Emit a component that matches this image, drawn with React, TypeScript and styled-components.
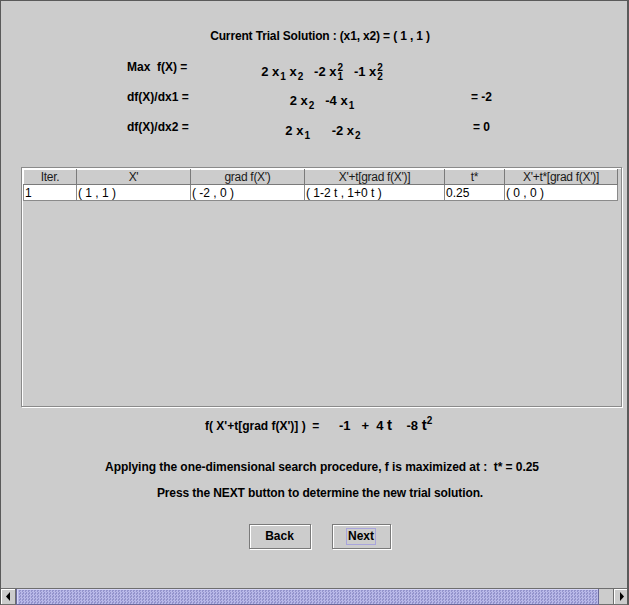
import React from 'react';
import styled, { createGlobalStyle } from 'styled-components';

const GlobalStyle = createGlobalStyle`
    html, body {
        margin: 0;
        padding: 0;
        background: #cccccc;
    }
    * {
        box-sizing: border-box;
    }
`;

const Frame = styled.div`
    width: 629px;
    height: 605px;
    background: #cccccc;
    border-top: 1px solid #5a5a5a;
    border-left: 1px solid #5a5a5a;
    border-right: 2px solid #5a5a5a;
    display: flex;
    flex-direction: column;
    font-family: "Liberation Sans", Arial, sans-serif;
    font-size: 12px;
    color: #000;
    overflow: hidden;
`;

const Title = styled.div`
    margin-top: 27px;
    text-align: center;
    font-weight: bold;
    letter-spacing: -0.15px;
    height: 16px;
    line-height: 16px;
    padding-left: 12px;
`;

const Equations = styled.div`
    margin-top: 15px;
    padding-left: 126px;
    display: grid;
    grid-template-columns: 100px 190px 1fr;
    grid-auto-rows: 30px;
    align-items: start;
`;

const Label = styled.div`
    font-weight: bold;
    line-height: 16px;
`;

const Formula = styled.div<{ $shift?: number }>`
    font-weight: bold;
    font-size: 13px;
    line-height: 16px;
    padding-top: 4px;
    text-align: center;
    white-space: pre;
    padding-left: ${(p) => p.$shift || 0}px;
`;

const Result = styled.div<{ $left: number }>`
    font-weight: bold;
    line-height: 16px;
    padding-left: ${(p) => p.$left}px;
    white-space: pre;
`;

const Scripts = styled.span`
    display: inline-block;
    vertical-align: -4px;
    font-size: 10px;
    line-height: 9px;
    margin-left: 1px;

    span {
        display: block;
    }
`;

const Sup = styled.sup`
    font-size: 10px;
    vertical-align: 6px;
    line-height: 0;
`;

const TablePanel = styled.div`
    margin: 18px 0 0 20px;
    width: 601px;
    height: 240px;
    border: 1px solid #8a8a8a;
    box-shadow: inset 1px 1px 0 #ffffff, 1px 1px 0 #ffffff;
    padding: 1px 0 0 1px;
`;

const Grid = styled.table`
    border-collapse: collapse;
    table-layout: fixed;
    width: 594px;
`;

const HeadCell = styled.th<{ $w: number }>`
    width: ${(p) => p.$w}px;
    height: 15px;
    padding: 0;
    font-weight: normal;
    font-size: 12px;
    letter-spacing: -0.3px;
    color: #1a1a1a;
    background: #cccccc;
    text-align: center;
    line-height: 13px;
    border-top: 1px solid #ffffff;
    border-left: 1px solid #ffffff;
    border-right: 1px solid #7a7a7a;
    border-bottom: 1px solid #7a7a7a;
    white-space: nowrap;
    overflow: hidden;
`;

const Cell = styled.td`
    height: 16px;
    padding: 0 0 0 1px;
    background: #ffffff;
    border: 1px solid #8a8a8a;
    border-top: none;
    line-height: 14px;
    font-size: 12px;
    white-space: pre;
    overflow: hidden;
`;

const Line = styled.div<{ $top: number; $indent: number; $tight: number }>`
    margin-top: ${(p) => p.$top}px;
    padding-left: ${(p) => p.$indent}px;
    letter-spacing: ${(p) => p.$tight}px;
    text-align: center;
    font-weight: bold;
    line-height: 16px;
    white-space: pre;
`;

const ObjectiveRow = styled.div`
    margin-top: 8px;
    display: flex;
    align-items: flex-end;
    height: 20px;
    padding-left: 204px;
    font-weight: bold;
    white-space: pre;
`;

const ObjLabel = styled.span`
    width: 134px;
    line-height: 16px;
    padding-bottom: 1px;
`;

const ObjExpr = styled.span`
    font-size: 13px;
    line-height: 16px;
    padding-bottom: 1px;
`;

const BigT = styled.span`
    font-size: 15px;
`;

const Buttons = styled.div`
    margin-top: 23px;
    display: flex;
    justify-content: center;
    gap: 21px;
    padding-left: 11px;
`;

const Button = styled.button<{ $w: number; $focus?: boolean }>`
    width: ${(p) => p.$w}px;
    height: 25px;
    background: #cccccc;
    border: 1px solid #7a7a7a;
    box-shadow: inset 1px 1px 0 #ffffff, 1px 1px 0 #ffffff;
    font-family: "Liberation Sans", Arial, sans-serif;
    font-weight: bold;
    font-size: 12px;
    color: #000;
    padding: 0;
    display: flex;
    align-items: center;
    justify-content: center;

    span {
        padding: 1px 1px;
        border: 1px solid ${(p) => (p.$focus ? '#a8a4dc' : 'transparent')};
        line-height: 13px;
    }
`;

const Spacer = styled.div`
    flex: 1;
`;

const ScrollBar = styled.div`
    height: 17px;
    border-top: 1px solid #6e6e6e;
    display: flex;
    margin-left: -1px;
    margin-right: -2px;
`;

const Arrow = styled.div`
    width: 16px;
    background: #cccccc;
    border: 1px solid #6e6e6e;
    border-top: none;
    box-shadow: inset 1px 1px 0 #ffffff;
    display: flex;
    align-items: center;
    justify-content: center;
`;

const Thumb = styled.div`
    width: 583px;
    border: 1px solid #6a6a9a;
    border-top: none;
    background: repeating-conic-gradient(#b9b9e8 0 25%, #9494cc 0 50%) 0 0 / 3px 3px;
    box-shadow: inset 1px 1px 0 #d6d6f6;
`;

const Track = styled.div`
    flex: 1;
    background: #cccccc;
    border-bottom: 1px solid #6e6e6e;
`;

const columns: { title: string; w: number }[] = [
    { title: 'Iter.', w: 53 },
    { title: "X'", w: 114 },
    { title: "grad f(X')", w: 114 },
    { title: "X'+t[grad f(X')]", w: 140 },
    { title: 't*', w: 60 },
    { title: "X'+t*[grad f(X')]", w: 113 },
];

const rows = [['1', '( 1 , 1 )', '( -2 , 0 )', '( 1-2 t , 1+0 t )', '0.25', '( 0 , 0 )']];

const X = ({ i, p }: { i: string; p?: string }) => (
    <>
        x
        <Scripts>
            {p && <span>{p}</span>}
            <span>{i}</span>
        </Scripts>
    </>
);

const App: React.FC = () => {
    return (
        <Frame>
            <GlobalStyle />
            <Title>Current Trial Solution : (x1, x2) = ( 1 , 1 )</Title>

            <Equations>
                <Label>Max&nbsp; f(X) =</Label>
                <Formula $shift={-8}>
                    2 <X i="1" /> <X i="2" />{'   '}-2 <X i="1" p="2" />{'   '}-1 <X i="2" p="2" />
                </Formula>
                <div />

                <Label>df(X)/dx1 =</Label>
                <Formula $shift={-4}>
                    2 <X i="2" />{'   '}-4 <X i="1" />
                </Formula>
                <Result $left={54}>= -2</Result>

                <Label>df(X)/dx2 =</Label>
                <Formula $shift={2}>
                    2 <X i="1" />{'      '}-2 <X i="2" />
                </Formula>
                <Result $left={56}>= 0</Result>
            </Equations>

            <TablePanel>
                <Grid>
                    <thead>
                        <tr>
                            {columns.map((c) => (
                                <HeadCell key={c.title} $w={c.w}>
                                    {c.title}
                                </HeadCell>
                            ))}
                        </tr>
                    </thead>
                    <tbody>
                        {rows.map((r) => (
                            <tr key={r[0]}>
                                {r.map((v, i) => (
                                    <Cell key={i}>{v}</Cell>
                                ))}
                            </tr>
                        ))}
                    </tbody>
                </Grid>
            </TablePanel>

            <ObjectiveRow>
                <ObjLabel>f( X'+t[grad f(X')] )&nbsp; =</ObjLabel>
                <ObjExpr>
                    -1{'   '}+{'  '}4 <BigT>t</BigT>{'    '}-8 <BigT>t</BigT>
                    <Sup>2</Sup>
                </ObjExpr>
            </ObjectiveRow>

            <Line $top={24} $indent={16} $tight={-0.05}>
                Applying the one-dimensional search procedure, f is maximized at :{'  '}t* = 0.25
            </Line>
            <Line $top={10} $indent={12} $tight={-0.1}>
                Press the NEXT button to determine the new trial solution.
            </Line>

            <Buttons>
                <Button $w={62}>
                    <span>Back</span>
                </Button>
                <Button $w={59} $focus>
                    <span>Next</span>
                </Button>
            </Buttons>

            <Spacer />

            <ScrollBar>
                <Arrow>
                    <svg width="5" height="9" viewBox="0 0 5 9">
                        <path d="M4 0 L0 4.5 L4 9 Z" fill="#000" />
                    </svg>
                </Arrow>
                <Thumb />
                <Track />
                <Arrow>
                    <svg width="5" height="9" viewBox="0 0 5 9">
                        <path d="M1 0 L5 4.5 L1 9 Z" fill="#000" />
                    </svg>
                </Arrow>
            </ScrollBar>
        </Frame>
    );
};

export default App;
